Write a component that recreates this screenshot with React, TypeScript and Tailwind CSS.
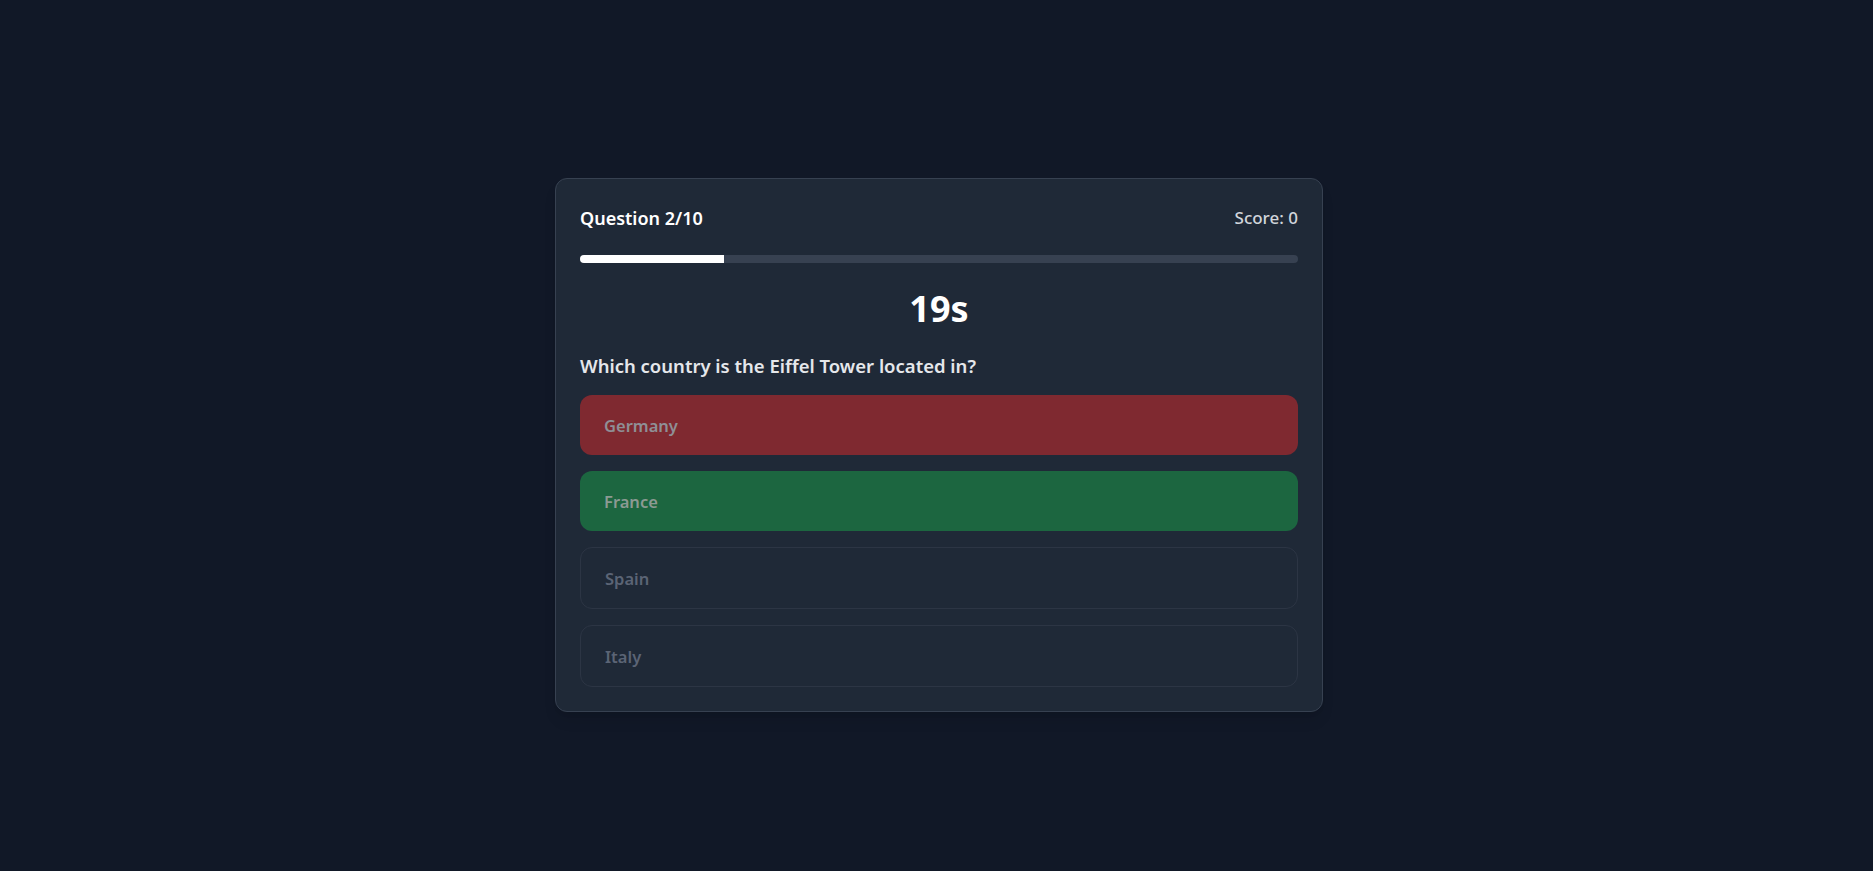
import React from "react";

const options = [
  { label: "Germany", cls: "h-[60px] bg-[#7f2930] text-[#8f8f96]" },
  { label: "France", cls: "h-[60px] bg-[#1c6640] text-[#8c9a93]" },
  { label: "Spain", cls: "h-[62px] bg-[#1f2937] border border-[#2c3544] text-[#5b6475]" },
  { label: "Italy", cls: "h-[62px] bg-[#1f2937] border border-[#2c3544] text-[#5b6475]" },
];

export default function App() {
  return (
    <div
      className="min-h-screen w-full bg-[#111827] flex items-center justify-center pt-[18px] pl-[5px]"
      style={{ fontFamily: '"Noto Sans", "Open Sans", sans-serif' }}
    >
      <div className="w-[768px] bg-[#1f2937] border border-[#374151] rounded-xl p-6 shadow-lg">
        <div className="flex items-center justify-between pt-[1px] -mb-[1px]">
          <div className="text-lg font-semibold text-white">Question 2/10</div>
          <div className="text-[17px] font-medium text-[#d1d5db]">Score: 0</div>
        </div>
        <div className="mt-6 h-2 w-full bg-[#374151] rounded-full overflow-hidden">
          <div className="h-full bg-white" style={{ width: "20%" }} />
        </div>
        <div className="mt-[26px] text-4xl font-bold text-white text-center">19s</div>
        <div className="mt-[23px] -mb-[1px] text-[18.5px] leading-7 font-semibold text-[#e5e7eb]">
          Which country is the Eiffel Tower located in?
        </div>
        <div className="mt-4 flex flex-col gap-4">
          {options.map((o) => (
            <button
              key={o.label}
              disabled
              className={`w-full flex items-center px-6 pt-1 rounded-xl text-[16.5px] font-semibold text-left ${o.cls}`}
            >
              {o.label}
            </button>
          ))}
        </div>
      </div>
    </div>
  );
}
